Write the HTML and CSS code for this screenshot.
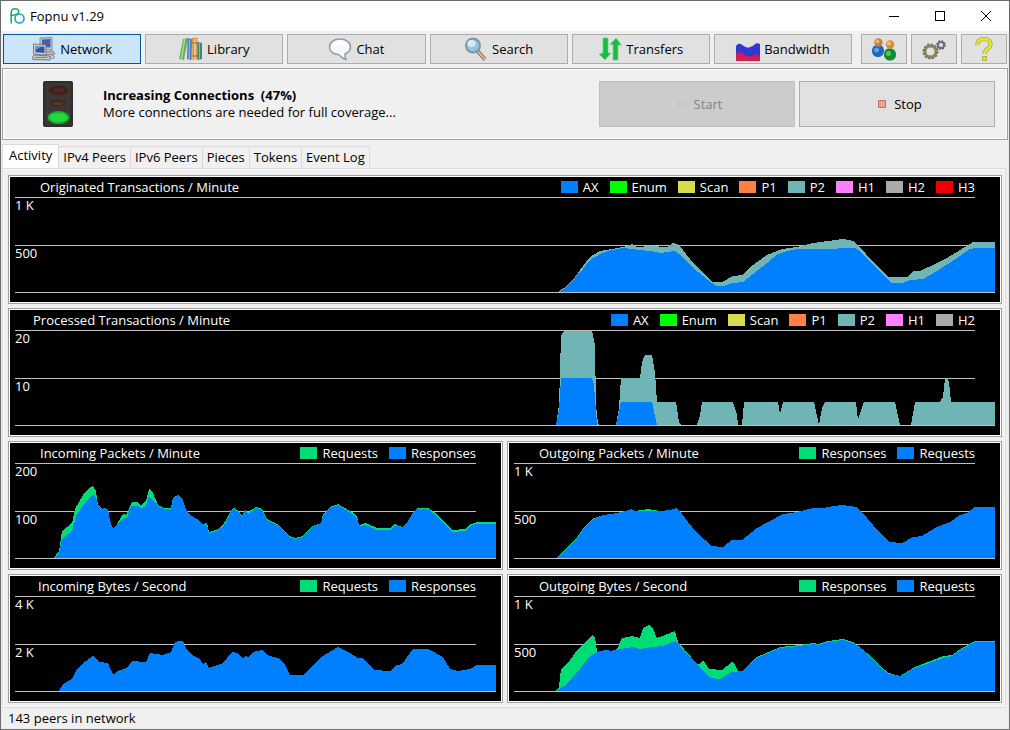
FILE: index.html
```html
<!DOCTYPE html>
<html lang="en">
<head>
    <meta charset="UTF-8">
    <meta name="viewport" content="width=device-width, initial-scale=1.0">
    <title>Fopnu v1.29</title>
    <link rel="stylesheet" href="styles.css">
</head>
<body>

    <header class="titlebar">
        <svg class="logo" viewBox="0 0 16 16" fill="none" stroke-width="1.600">
            <path d="M2.200 15.500V5Q2.200 0.800 6 0.800Q9.800 0.800 9.800 4Q9.800 5.500 7 6.500Q5 7.500 1 7.500" stroke="#2fa866"/>
            <circle cx="10.500" cy="10.500" r="4.500" stroke="#1fa5b5"/>
        </svg>
        <span class="app-name">Fopnu v1.29</span>
        <button class="win-btn" aria-label="Minimize"><svg viewBox="0 0 10 10"><path d="M0 5.500H10"/></svg></button>
        <button class="win-btn" aria-label="Maximize"><svg viewBox="0 0 10 10"><path d="M0.500 0.500H9.500V9.500H0.500Z"/></svg></button>
        <button class="win-btn" aria-label="Close"><svg viewBox="0 0 10 10"><path d="M0 0L10 10M10 0L0 10" shape-rendering="auto"/></svg></button>
    </header>

    <nav class="toolbar">
        <button class="tool active">
            <svg class="icon" viewBox="0 0 24 24">
                <path d="M8 1L20 0.500V13L8 12Z" fill="#c9c9c4" stroke="#77777a" stroke-width=".8"/>
                <path d="M10 2.500L18.500 2V10.500L10 10Z" fill="#3d62b4"/>
                <path d="M12 15L21 14L23 17L13 18Z" fill="#bbbab4" stroke="#77777a" stroke-width=".8"/>
                <path d="M1.500 7L14 8V18L1.500 17Z" fill="#d3d2cb" stroke="#66666a" stroke-width=".8"/>
                <path d="M3.500 9L12.500 9.700V16L3.500 15.200Z" fill="#2e55a8"/>
                <path d="M3.500 9L10 9.500L3.500 13Z" fill="#6f92d5"/>
                <path d="M0.500 20L2 18L18 19V23L1 22.500Z" fill="#cac9c1" stroke="#66666a" stroke-width=".8"/>
                <path d="M3 20.500H15" stroke="#85857f"/>
                <ellipse cx="20.500" cy="20" rx="2" ry="1.500" fill="#dcdcd6" stroke="#77777a" stroke-width=".8"/>
            </svg>
            Network
        </button>
        <button class="tool">
            <svg class="icon" viewBox="0 0 24 24">
                <path d="M4 2L9 1L5 23L0 22Z" fill="#69b05e"/>
                <path d="M5 2L6.500 1.700L3 22.500L1.500 22Z" fill="#a9d996"/>
                <path d="M8.500 1L13 2L12.500 23L8 22Z" fill="#4a78ba"/>
                <path d="M10 2L11.300 2.300L10.800 22L9.300 22Z" fill="#91b2de"/>
                <path d="M13 1L18.500 0.500L19 22L13.500 23Z" fill="#db9441"/>
                <path d="M15 2H17V22L15 22.500Z" fill="#f1c57b"/>
                <path d="M13.500 6H18.600M13.500 19H19" stroke="#9e612b"/>
                <path d="M18.500 5L23 6V22L18.500 23Z" fill="#35887a"/>
                <path d="M20.500 6V22" stroke="#79bdb0"/>
            </svg>
            Library
        </button>
        <button class="tool">
            <svg class="icon" viewBox="0 0 24 24">
                <path d="M12 2C5.500 2 1.500 5.500 1.500 10C1.500 14.500 5.500 17.500 10.500 17.500C12 19 14 21.500 18 22.500C17 20.500 16.500 18.500 17 17C20.500 15.500 22.500 13 22.500 10C22.500 5.500 18 2 12 2Z" fill="#f4f7fc" stroke="#8f99ad" stroke-width="1.500"/>
                <path d="M4 9C5 5.500 8 4 12 4C16 4 19 6 20 9C15 7 9 7 4 9Z" fill="#fff"/>
            </svg>
            Chat
        </button>
        <button class="tool">
            <svg class="icon" viewBox="0 0 24 24">
                <path d="M13.500 14L21 22.500" stroke="#8d6b55" stroke-width="4"/>
                <path d="M13.500 14L21 22.500" stroke="#d8b797" stroke-width="2"/>
                <circle cx="9" cy="8.500" r="7" fill="#8fc5e6" stroke="#8693a3" stroke-width="2"/>
                <ellipse cx="7.500" cy="6.500" rx="4" ry="3.500" fill="#d5ecf8"/>
            </svg>
            Search
        </button>
        <button class="tool">
            <svg class="icon" viewBox="0 0 24 24">
                <path d="M5 1H10V16H13L7 23L1 17L5 16Z" fill="#18bd42" stroke="#66d983" stroke-width=".7"/>
                <path d="M15 23H20V8H23.500L18 1L12 7.500H15Z" fill="#18bd42" stroke="#66d983" stroke-width=".7"/>
            </svg>
            Transfers
        </button>
        <button class="tool">
            <svg class="icon" viewBox="0 0 24 24">
                <path d="M0 9C3 5 5 7 8 9C12 12 15 10 18 8C20 6 22 6 24 7V24H0Z" fill="#3038cf"/>
                <path d="M0 17C3 14 6 15 9 18C12 20 15 20 18 18C20 17 22 18 24 19V24H0Z" fill="#cf1f50"/>
            </svg>
            Bandwidth
        </button>
        <div class="tool-group">
            <button class="tool small" aria-label="Contacts">
                <svg class="icon" viewBox="0 0 24 24">
                    <path d="M0 14C0 9 3 8 6 8C10 8 12 10 12 14C12 18 9 20 6 20C3 20 0 18 0 14Z" fill="#1d67bd"/>
                    <ellipse cx="4.500" cy="13" rx="2.500" ry="2.500" fill="#5ba3e6"/>
                    <circle cx="6.500" cy="5.500" r="4.200" fill="#c98135"/>
                    <circle cx="5.500" cy="4.500" r="2" fill="#edb26c"/>
                    <path d="M12 18C12 13 14 11.500 18 11.500C22 11.500 24 14 24 18C24 21.500 21 23.500 18 23.500C15 23.500 12 21.500 12 18Z" fill="#158c2b"/>
                    <ellipse cx="16.500" cy="16.500" rx="2.500" ry="2.500" fill="#4cc660"/>
                    <circle cx="18" cy="7.500" r="4.200" fill="#d58d3d"/>
                    <circle cx="17" cy="6.500" r="2" fill="#f4bf7b"/>
                </svg>
            </button>
            <button class="tool small" aria-label="Settings">
                <svg class="icon" viewBox="0 0 24 24" fill="none">
                    <circle cx="8.500" cy="14.500" r="7" stroke="#6b6950" stroke-width="2" stroke-dasharray="2.200 1.465"/>
                    <circle cx="8.500" cy="14.500" r="5.500" stroke="#85825f" stroke-width="2.800"/>
                    <circle cx="19" cy="8" r="4" stroke="#4f5a6b" stroke-width="1.600" stroke-dasharray="1.800 1.342"/>
                    <circle cx="19" cy="8" r="3" stroke="#66717f" stroke-width="1.800"/>
                </svg>
            </button>
            <button class="tool small" aria-label="Help">
                <svg class="icon" viewBox="0 0 24 24" fill="none">
                    <path d="M5.500 8C5 4 8 2 12 2C16 2 19 4 18.500 8C18 12 12.500 12 12.500 17" stroke="#a3a329" stroke-width="4.200"/>
                    <path d="M5.500 8C5 4 8 2 12 2C16 2 19 4 18.500 8C18 12 12.500 12 12.500 17" stroke="#e0e43c" stroke-width="2.800"/>
                    <path d="M10.500 19.500H14.500V23.500H10.500Z" fill="#dfe13a" stroke="#a3a329" stroke-width=".8"/>
                </svg>
            </button>
        </div>
    </nav>

    <section class="status">
        <svg class="traffic-light" viewBox="0 0 30 46">
            <rect width="30" height="46" rx="2" fill="#2e2e2e"/>
            <rect x="2" y="2" width="26" height="42" fill="#393836"/>
            <ellipse cx="15.500" cy="9.500" rx="10" ry="5" fill="#3c211c" stroke="#522d25"/>
            <ellipse cx="15.500" cy="9" rx="6" ry="2.500" fill="#4b2a23"/>
            <ellipse cx="15" cy="22" rx="8" ry="4" fill="#3b2a24" stroke="#4b3028"/>
            <ellipse cx="15" cy="22.500" rx="5" ry="1.500" fill="#593a2e"/>
            <ellipse cx="15.500" cy="36.500" rx="11" ry="6.500" fill="#12b32a"/>
            <ellipse cx="15.500" cy="36.500" rx="9" ry="4.500" fill="#20d93a"/>
        </svg>
        <div class="status-text">
            <strong>Increasing Connections&nbsp; (47%)</strong>
            <span>More connections are needed for full coverage...</span>
        </div>
        <button class="action" disabled>
            <svg class="action-icon" viewBox="0 0 8 8"><path d="M0.500 0.500L7 4L0.500 7.500Z" fill="#d3cfcf" stroke="#bbb"/></svg>
            Start
        </button>
        <button class="action">
            <svg class="action-icon" viewBox="0 0 8 8"><path d="M0.500 0.500H7.500V7.500H0.500Z" fill="#f0a08c" stroke="#bd7467"/></svg>
            Stop
        </button>
    </section>

    <div class="tabs" role="tablist">
        <button class="tab selected" role="tab" aria-selected="true">Activity</button>
        <button class="tab" role="tab">IPv4 Peers</button>
        <button class="tab" role="tab">IPv6 Peers</button>
        <button class="tab" role="tab">Pieces</button>
        <button class="tab" role="tab">Tokens</button>
        <button class="tab" role="tab">Event Log</button>
    </div>

    <main class="pane">
        <section class="chart wide">
            <div class="chart-head">
                <h2>Originated Transactions / Minute</h2>
                <ul class="legend">
                    <li class="ax">AX</li>
                    <li class="enum">Enum</li>
                    <li class="scan">Scan</li>
                    <li class="p1">P1</li>
                    <li class="p2">P2</li>
                    <li class="h1">H1</li>
                    <li class="h2">H2</li>
                    <li class="h3">H3</li>
                </ul>
            </div>
            <div class="plot">
                <svg viewBox="0 0 980 96" preserveAspectRatio="none">
                    <path class="grid" d="M0 0.500H960M0 48.500H960"/>
                    <polygon class="fill-p2" points="544,95 544,94 552,89 560,80 568,69 575,60 585,54 597,52 608,50 617,47 622,50 635,49 652,50 658,46 662,47 668,53 678,66 688,76 697,85 707,85 718,79 727,78 738,68 752,58 767,52 782,50 798,46 813,44 828,42 838,44 845,50 858,65 873,80 892,80 898,74 905,74 922,66 932,61 945,53 958,45 980,45 980,95"/>
                    <polygon class="fill-ax" points="544,95 552,90 560,81 568,72 575,63 580,60 587,56 597,53 608,51 617,52 625,53 635,54 645,56 660,54 667,59 677,70 688,79 697,86 702,89 708,89 717,86 728,85 738,77 752,66 763,57 772,54 783,52 818,52 828,51 840,51 845,54 855,65 865,75 877,86 888,86 895,83 908,82 922,74 942,61 955,52 960,51 980,51 980,95"/>
                    <path class="grid" d="M0 95.500H980"/>
                </svg>
                <span class="scale top">1 K</span>
                <span class="scale mid">500</span>
            </div>
        </section>

        <section class="chart wide">
            <div class="chart-head">
                <h2 class="after-20">Processed Transactions / Minute</h2>
                <ul class="legend">
                    <li class="ax">AX</li>
                    <li class="enum">Enum</li>
                    <li class="scan">Scan</li>
                    <li class="p1">P1</li>
                    <li class="p2">P2</li>
                    <li class="h1">H1</li>
                    <li class="h2">H2</li>
                </ul>
            </div>
            <div class="plot">
                <svg viewBox="0 0 980 96" preserveAspectRatio="none">
                    <path class="grid" d="M0 0.500H960M0 48.500H960"/>
                    <polygon class="fill-p2" points="541,95 544,75 546,6 549,1 577,1 580,15 581,75 583,94 585,95 601,95 604,78 606,48 625,48 627,32 630,25 637,25 640,43 642,72 661,72 664,92 666,95 682,95 685,85 687,72 718,72 722,85 723,95 727,95 729,72 763,72 765,84 768,72 799,72 804,95 807,78 810,72 841,72 843,90 849,72 880,72 885,95 896,95 900,72 925,72 928,67 930,49 932,48 934,52 936,72 980,72 980,95"/>
                    <polygon class="fill-ax" points="541,95 544,80 546,48 577,48 579,55 582,95"/>
                    <polygon class="fill-ax" points="601,95 606,72 637,72 642,95"/>
                    <path class="grid" d="M0 95.500H980"/>
                </svg>
                <span class="scale top">20</span>
                <span class="scale mid">10</span>
            </div>
        </section>

        <section class="chart">
            <div class="chart-head">
                <h2>Incoming Packets / Minute</h2>
                <ul class="legend">
                    <li class="green">Requests</li>
                    <li class="ax">Responses</li>
                </ul>
            </div>
            <div class="plot">
                <svg viewBox="0 0 481 96" preserveAspectRatio="none">
                    <path class="grid" d="M0 0.500H461M0 48.500H461"/>
                    <polygon class="fill-green" points="39,95 44,88 45,82 47,68 57,60 60,46 68,32 75,24 78,23 81,28 83,42 87,46 89,45 93,46 95,58 98,65 102,61 108,51 111,52 117,39 122,39 126,42 131,38 134,26 138,30 143,42 149,45 156,45 158,35 163,32 167,35 171,46 175,52 182,56 188,61 192,60 194,69 203,66 208,62 212,55 216,47 219,45 224,48 227,53 230,47 233,49 241,44 247,46 252,56 262,61 273,72 280,75 288,73 297,63 306,60 308,51 317,43 323,41 328,44 337,49 342,53 344,62 351,60 362,65 375,65 380,61 387,64 392,60 398,49 402,45 413,45 422,51 430,60 437,67 450,66 456,61 462,59 481,59 481,95"/>
                    <polygon class="fill-ax" points="39,95 44,90 47,76 53,71 57,68 61,53 67,44 73,36 78,32 81,34 83,43 87,46 89,45 93,46 95,58 98,65 102,61 108,55 112,55 116,43 123,43 126,46 131,43 134,33 138,38 143,43 149,46 156,46 158,36 163,32 167,35 171,46 175,52 182,56 188,62 192,61 194,71 203,67 208,64 212,57 216,48 219,46 224,49 227,54 230,48 233,51 241,45 247,47 252,57 262,62 273,73 280,76 288,74 297,64 306,60 308,52 317,44 323,42 328,45 337,51 342,55 344,63 351,62 362,67 375,67 380,63 387,64 392,60 398,49 402,46 413,46 422,53 430,62 437,69 450,68 456,62 462,61 481,61 481,95"/>
                    <path class="grid" d="M0 95.500H481"/>
                </svg>
                <span class="scale top">200</span>
                <span class="scale mid">100</span>
            </div>
        </section>

        <section class="chart">
            <div class="chart-head">
                <h2>Outgoing Packets / Minute</h2>
                <ul class="legend">
                    <li class="green">Responses</li>
                    <li class="ax">Requests</li>
                </ul>
            </div>
            <div class="plot">
                <svg viewBox="0 0 481 96" preserveAspectRatio="none">
                    <path class="grid" d="M0 0.500H461M0 48.500H461"/>
                    <polygon class="fill-green" points="42,95 46,91 56,82 63,74 71,63 78,56 89,52 121,48 127,47 135,46 139,47 146,48 146,95"/>
                    <polygon class="fill-ax" points="42,95 46,92 56,83 63,75 71,64 78,57 89,52 103,50 111,48 117,46 121,48 133,48 146,48 156,47 162,45 168,51 174,59 183,70 191,77 197,83 209,84 218,77 228,77 243,65 256,58 269,51 283,49 299,45 309,45 319,43 329,42 342,44 353,55 366,70 375,79 388,80 399,74 408,73 423,64 436,59 446,52 453,50 461,44 481,44 481,95"/>
                    <path class="grid" d="M0 95.500H481"/>
                </svg>
                <span class="scale top">1 K</span>
                <span class="scale mid">500</span>
            </div>
        </section>

        <section class="chart">
            <div class="chart-head">
                <h2 class="after-4k">Incoming Bytes / Second</h2>
                <ul class="legend">
                    <li class="green">Requests</li>
                    <li class="ax">Responses</li>
                </ul>
            </div>
            <div class="plot">
                <svg viewBox="0 0 481 96" preserveAspectRatio="none">
                    <path class="grid" d="M0 0.500H461M0 48.500H461"/>
                    <polygon class="fill-ax" points="44,95 48,88 57,83 62,73 68,67 78,60 85,66 93,67 96,74 99,79 102,75 112,72 117,65 131,66 135,57 148,59 156,56 160,46 164,45 168,45 171,52 177,59 185,63 188,68 191,66 194,72 208,67 217,56 222,57 228,62 230,60 234,61 238,56 248,54 252,59 263,62 270,69 275,79 289,79 298,69 308,60 323,51 335,57 343,62 348,62 359,74 375,75 382,69 387,68 398,53 413,53 428,61 435,73 443,75 455,73 462,69 481,69 481,95"/>
                    <path class="grid" d="M0 95.500H481"/>
                </svg>
                <span class="scale top">4 K</span>
                <span class="scale mid">2 K</span>
            </div>
        </section>

        <section class="chart">
            <div class="chart-head">
                <h2>Outgoing Bytes / Second</h2>
                <ul class="legend">
                    <li class="green">Responses</li>
                    <li class="ax">Requests</li>
                </ul>
            </div>
            <div class="plot">
                <svg viewBox="0 0 481 96" preserveAspectRatio="none">
                    <path class="grid" d="M0 0.500H461M0 48.500H461"/>
                    <polygon class="fill-green" points="42,95 45,91 47,73 54,67 61,57 69,48 78,39 81,41 83,56 98,55 103,53 108,42 118,40 126,42 129,32 135,29 139,33 143,42 151,39 161,35 164,46 183,68 185,68 189,64 195,73 208,74 218,66 221,69 224,75 228,75 243,61 266,51 286,49 299,47 304,48 314,45 329,43 339,46 353,57 366,70 375,77 386,80 401,71 429,60 438,59 448,52 461,45 481,45 481,95"/>
                    <polygon class="fill-ax" points="42,95 53,88 66,73 76,60 83,56 91,54 98,55 106,53 119,51 126,53 138,51 149,50 161,45 166,50 183,68 196,82 206,83 218,76 228,75 243,62 266,52 286,50 299,48 304,49 314,46 329,44 339,47 353,57 366,71 375,78 386,80 401,72 429,62 438,60 448,53 461,46 481,46 481,95"/>
                    <path class="grid" d="M0 95.500H481"/>
                </svg>
                <span class="scale top">1 K</span>
                <span class="scale mid">500</span>
            </div>
        </section>
    </main>

    <footer class="statusbar">143 peers in network</footer>

</body>
</html>
```
FILE: styles.css
```css
* {
    box-sizing: border-box;
}

body {
    margin: 0;
    min-height: 100vh;
    display: flex;
    flex-direction: column;
    background-color: #f0f0f0;
    border: 1px solid #6b6b6b;
    color: #000;
    font-family: "Open Sans", "Noto Sans", sans-serif;
    font-size: 13px;
    line-height: 17px;
}

button {
    font: inherit;
    color: inherit;
    margin: 0;
    padding: 0;
}

/* Title bar */
.titlebar {
    display: flex;
    align-items: center;
    height: 30px;
    padding-left: 8px;
    background-color: #fff;
}

.logo {
    width: 16px;
    height: 16px;
}

.app-name {
    flex: 1;
    margin-left: 5px;
}

.win-btn {
    width: 46px;
    height: 30px;
    border: none;
    background: none;
}

.win-btn svg {
    display: block;
    width: 10px;
    height: 10px;
    margin: 0 auto;
    fill: none;
    stroke: #000;
    shape-rendering: crispEdges;
}

/* Toolbar */
.toolbar {
    display: flex;
    gap: 4px;
    padding: 3px 2px 4px;
}

.tool {
    flex: 1;
    display: flex;
    align-items: center;
    justify-content: center;
    gap: 4px;
    height: 30px;
    border: 1px solid #adadad;
    background-color: #e1e1e1;
}

.tool.active {
    border-color: #0055a0;
    background-color: #cce4f7;
}

.tool-group {
    display: flex;
    gap: 4px;
    margin-left: 5px;
}

.tool.small {
    flex: none;
    width: 46px;
}

.icon {
    width: 24px;
    height: 24px;
}

/* Connection status */
.status {
    display: flex;
    align-items: center;
    gap: 4px;
    margin: 0 1px;
    padding: 12px;
    border: 1px solid #a0a0a0;
    box-shadow: inset 0 0 0 1px #fff;
}

.traffic-light {
    width: 30px;
    height: 46px;
    margin: 0 26px 0 28px;
}

.status-text {
    flex: 1;
    display: flex;
    flex-direction: column;
}

.action {
    display: flex;
    align-items: center;
    justify-content: center;
    gap: 8px;
    width: 196px;
    height: 46px;
    padding-left: 6px;
    border: 1px solid #adadad;
    background-color: #e1e1e1;
}

.action:disabled {
    border-color: #bfbfbf;
    background-color: #ccc;
    color: #838383;
}

.action-icon {
    width: 8px;
    height: 8px;
}

/* Tabs */
.tabs {
    display: flex;
    align-items: flex-end;
    margin: 4px 1px 0;
}

.tab {
    height: 22px;
    padding: 0 4px;
    border: 1px solid #d9d9d9;
    border-width: 1px 1px 0 0;
    background-color: #f0f0f0;
}

.tab.selected {
    height: 24px;
    padding: 0 6px 2px;
    border-left-width: 1px;
    background-color: #fff;
}

/* Charts */
.pane {
    display: grid;
    grid-template-columns: 1fr 1fr;
    gap: 4px;
    margin: 0 3px 0 1px;
    padding: 6px 3px 4px 5px;
    border: 1px solid #dcdcdc;
    box-shadow: inset 0 0 0 1px #f9f9f9;
}

.chart {
    padding: 0 5px 9px;
    background-color: #000;
    border: 1px solid #fff;
    outline: 1px solid #a0a0a0;
    margin: 1px;
    color: #fff;
}

.chart.wide {
    grid-column: span 2;
}

.chart-head {
    display: flex;
    align-items: center;
    justify-content: space-between;
    height: 20px;
    padding: 0 20px 0 25px;
}

.chart-head h2 {
    margin: 0;
    font-size: 13px;
    font-weight: normal;
}

.chart-head h2.after-20 {
    margin-left: -7px;
}

.chart-head h2.after-4k {
    margin-left: -2px;
}

.legend {
    display: flex;
    gap: 11px;
    margin: 0;
    padding: 0;
    list-style: none;
}

.legend li {
    display: flex;
    align-items: center;
    gap: 5px;
}

.legend li::before {
    content: "";
    width: 17px;
    height: 12px;
    background-color: currentColor;
}

.legend .ax::before { background-color: #0080ff; }
.legend .enum::before { background-color: #00ff00; }
.legend .scan::before { background-color: #d5dd4d; }
.legend .p1::before { background-color: #ff8040; }
.legend .p2::before { background-color: #70b5b5; }
.legend .h1::before { background-color: #ff80ff; }
.legend .h2::before { background-color: #aaa; }
.legend .h3::before { background-color: #f00000; }
.legend .green::before { background-color: #00dd77; }

.plot {
    position: relative;
    height: 96px;
}

.plot svg {
    display: block;
    width: 100%;
    height: 96px;
    shape-rendering: crispEdges;
}

.grid {
    fill: none;
    stroke: #c0c0c0;
}

.fill-ax { fill: #0080ff; }
.fill-p2 { fill: #70b5b5; }
.fill-green { fill: #00dd77; }

/* Scale labels lie over the plot */
.scale {
    position: absolute;
    left: 0;
}

.scale.top {
    top: 0;
}

.scale.mid {
    top: 48px;
}

/* Bottom bar */
.statusbar {
    display: flex;
    flex: 1;
    align-items: center;
    padding: 0 7px;
}
```
